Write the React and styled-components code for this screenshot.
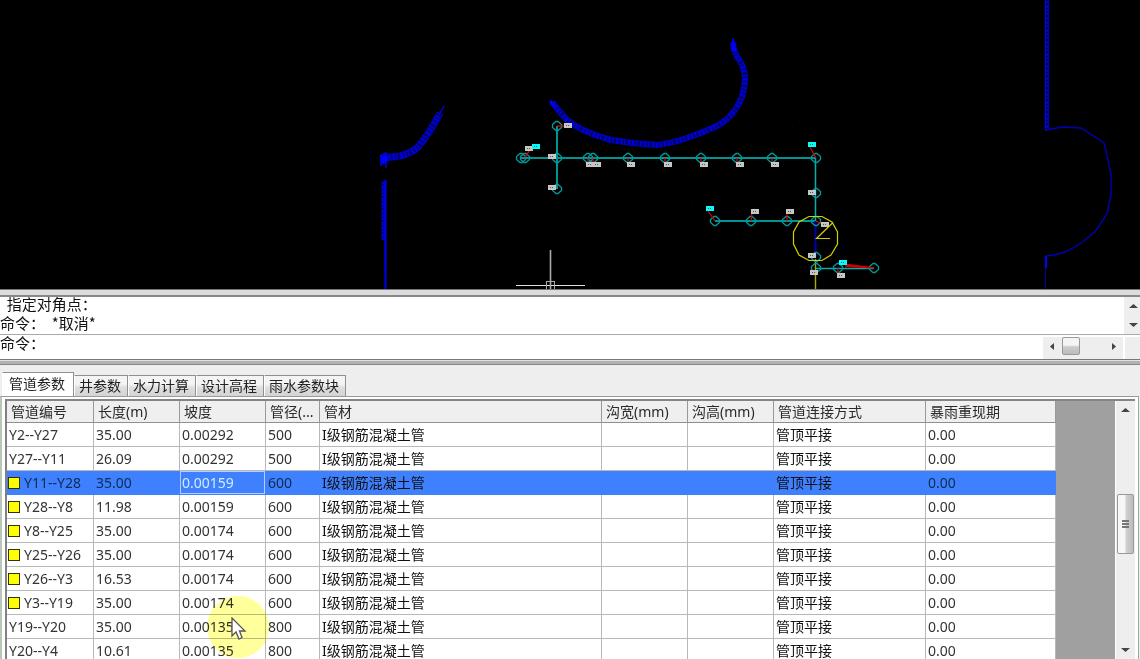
import React, { useState } from 'react';
import styled, { createGlobalStyle, css } from 'styled-components';

const GlobalStyle = createGlobalStyle`
  * { box-sizing: border-box; }
  body {
    margin: 0;
    background: #eeeeee;
    color: #2a2a2a;
    font: 14px/20px "Noto Sans", "Noto Sans CJK SC", sans-serif;
    overflow: hidden;
  }
  button, input { font: inherit; color: inherit; }
`;

const Page = styled.div`
  display: flex;
  flex-direction: column;
  height: 100vh;
`;

/* ---------- drawing area ---------- */

const Drawing = styled.svg`
  display: block;
  flex: none;
  width: 100%;
  height: auto;
  background: #000;
`;

const LEFT_CURVE = 'M383 158 Q392 157 400 156 Q412 153 418 147 Q430 133 440 113';
const LEFT_WALL = 'M383.500 181 V240';
const ARC = 'M552 102 Q558 110 567 120 Q575 126 583 130 Q596 136 611 140 Q634 144 657 145 Q672 143 684 139 Q702 133 717 126 Q728 120 735 110 Q744 98 745 80 Q745 69 740 61 Q733 52 733 42';
const RIGHT_WALL = 'M1047 0 V130';

const NODES = [
  [521, 158], [525, 158], [557, 126], [557, 158], [557, 189], [588, 158], [593, 158],
  [628, 158], [665, 158], [701, 158], [737, 158], [772, 158], [816, 158], [816, 193],
  [816, 221], [816, 257], [816, 268], [838, 268], [874, 268], [715, 221], [751, 221], [787, 221],
];

const TAGS = [
  [568, 125], [529, 148], [552, 156], [552, 187], [590, 164], [597, 164], [631, 164],
  [668, 164], [704, 164], [740, 164], [775, 164], [812, 192], [755, 211], [790, 211],
  [825, 224], [812, 255], [814, 272], [841, 275],
];

const INLET_TAGS = [[536, 146], [812, 144], [710, 208], [843, 262]];

const LEADERS = 'M557 126 L565 126 M525 157 L530 150 L534 147 M588 158 V163 M593 158 V163 M628 158 V163 M665 158 V163 M701 158 V163 M737 158 V163 M772 158 V163 M816 158 L810 147 M715 221 L708 211 M751 221 L752 213 M787 221 V213 M816 221 L822 224 M838 268 V273 M874 268 L843 264 M874 268 L845 266';

const Band = ({ d, width = 6 }) => (
  <g fill="none">
    <path d={d} stroke="#0000cc" strokeWidth={width} />
    <path d={d} stroke="#000044" strokeWidth={width - 2} strokeDasharray="1 2 2 3 1 3" />
  </g>
);

const Tag = ({ x, y, fill }) => (
  <g>
    <rect x={x - 4} y={y - 2} width="8" height="5" fill={fill} />
    <path d={`M${x - 2} ${y + 0.5}h1 M${x} ${y + 0.5}h1`} stroke="#555" />
  </g>
);

const SitePlan = () => (
  <Drawing viewBox="0 0 1140 289" role="img" aria-label="管网平面图">
    <Band d={LEFT_CURVE} width={7} />
    <path d="M380 156 L386 153 V168 M381 156 V166 M439 115 L444 106" fill="none" stroke="#0000e6" strokeWidth="1.5" />
    <path d="M380 156 H388 V161 L382 165 Z" fill="#00f" />
    <Band d={LEFT_WALL} width={4} />
    <path d="M385.500 180 V289" stroke="#0000ee" strokeWidth="2" />
    <path d="M384.500 240 V270" stroke="#0000aa" />
    <Band d={ARC} width={6} />
    <path d="M733 38 L732 50 L736 52 L733 38" stroke="#00f" fill="#00f" />
    <path d="M550 101 L555 106" stroke="#00f" strokeWidth="3" />
    <Band d={RIGHT_WALL} width={4} />
    <path d="M1045.500 0 V131" stroke="#0000ee" />
    <path
      d="M1046 130 L1062 127 L1081 128 L1104 143 L1108 160 L1111 175 V195 L1107 214 L1095 232 L1080 244 L1065 252 L1054 255 L1046 256"
      fill="none"
      stroke="#0000b4"
      strokeWidth="1.4"
    />
    <path d="M1046 256 V268" stroke="#00f" strokeWidth="2" />
    <path d="M1045.500 268 V289" stroke="#0000aa" />
    <path d="M510 140h1 M691 203h1 M792 127h1" stroke="#000088" />

    <g fill="none" stroke="#009494" strokeWidth="2">
      <path d="M521 158 H816 M557 126 V189 M715 221 H816" />
      <path d="M815.500 158 V221 M816 268.500 H874" stroke="#00b0b0" strokeWidth="1.5" />
    </g>
    <path d="M815.500 221 V257" stroke="#0000aa" strokeWidth="2" />
    <path d="M815.500 259 V289" stroke="#aaaa00" strokeWidth="1.4" />
    <g fill="none" stroke="#009a9a" strokeWidth="1.3">
      {NODES.map(([x, y]) => (
        <path key={`${x}-${y}`} d={`M${x - 1} ${y - 4.5} h2 l3.5 3 v3 l-3.5 3 h-2 l-3.5 -3 v-3z`} />
      ))}
    </g>
    <path d={LEADERS} fill="none" stroke="#d40000" strokeWidth="1.3" />
    {TAGS.map(([x, y]) => <Tag key={`${x}-${y}`} x={x} y={y} fill="#c6c6c6" />)}
    {INLET_TAGS.map(([x, y]) => <Tag key={`${x}-${y}`} x={x} y={y} fill="#00ffff" />)}
    <g fill="none" stroke="#d0d000" strokeWidth="1.2">
      <path d="M809 216.500 H822 L832 222 L837.500 232 V244 L831 255 L822 260.500 H809 L799 255 L793.500 244 V232 L799 222 Z" />
      <path d="M830 238.500 H816.500 L833 222.500" />
    </g>

    <path d="M516 285.500 H585" stroke="#e0e0e0" />
    <path d="M550.500 250 V289" stroke="#aaa" strokeWidth="1.6" />
    <rect x="546.500" y="281.500" width="8" height="8" fill="none" stroke="#aaa" />
  </Drawing>
);

/* ---------- splitters ---------- */

const Splitter = styled.div`
  flex: none;
  height: 8px;
  background: #dcdcdc;
  border-top: 1px solid #777777;
  border-bottom: 2px solid #888888;
`;

const DockSplitter = styled.div`
  flex: none;
  height: 6px;
  background: #b2b2b2;
  border-top: 1px solid #777777;
  border-bottom: 1px solid #888888;
  box-shadow: inset 0 1px #e0e0e0;
`;

/* ---------- command window ---------- */

const CommandWindow = styled.section`
  flex: none;
  background: #ffffff;
  color: #111111;
  font-family: "Noto Sans CJK SC", sans-serif;
  font-size: 15px;
`;

const History = styled.div`
  display: flex;
  height: 38px;
  border-bottom: 1px solid #aaaaaa;
`;

const HistoryText = styled.pre`
  flex: 1;
  margin: -3px 0 0;
  font: inherit;
  line-height: 19px;
`;

const Prompt = styled.div`
  display: flex;
  height: 24px;
`;

const PromptLabel = styled.label`
  line-height: 16px;
`;

const PromptInput = styled.input`
  flex: 1;
  min-width: 0;
  border: 0;
  padding: 0;
  outline: 0;
  background: transparent;
`;

const ScrollButton = styled.button`
  display: flex;
  align-items: center;
  justify-content: center;
  width: 18px;
  height: 18px;
  padding: 0;
  border: 0;
  background: transparent;
`;

const HistoryScroll = styled.div`
  display: flex;
  flex-direction: column;
  justify-content: space-between;
  align-items: center;
  width: 16px;
  padding-left: 2px;
  background: #eeeeee;
`;

const HorizontalScroll = styled.div`
  display: flex;
  align-items: flex-start;
  width: 82px;
  margin-top: 2px;
  background: #eeeeee;
  border-right: 2px solid #ffffff;
`;

const Corner = styled.div`
  width: 15px;
  margin-top: 2px;
  background: #eeeeee;
`;

const SmallThumb = styled.div`
  width: 18px;
  height: 18px;
  margin: 0 24px 0 1px;
  border: 1px solid #999999;
  border-radius: 2px;
  background: linear-gradient(#f4f4f4 45%, #cccccc 55%, #bbbbbb);
`;

const ARROWS = {
  up: 'M0 6 L4.500 2 L9 6Z',
  down: 'M0 2 L4.500 6 L9 2Z',
  left: 'M6 1 L2 4.500 L6 8Z',
  right: 'M3 1 L7 4.500 L3 8Z',
};

const Arrow = ({ direction, label }) => (
  <ScrollButton aria-label={label}>
    <svg width="9" height="9" viewBox="0 0 9 9">
      <path d={ARROWS[direction]} fill="#444" />
    </svg>
  </ScrollButton>
);

/* ---------- parameter panel ---------- */

const Panel = styled.section`
  position: relative;
  display: flex;
  flex: 1;
  flex-direction: column;
  min-height: 0;
  padding-top: 7px;
`;

const TabList = styled.div`
  display: flex;
  flex: none;
  align-items: flex-end;
  height: 24px;
  padding-left: 2px;
`;

const Tab = styled.button`
  height: 21px;
  padding: 0 6px 0 4px;
  border: 1px solid #909090;
  border-bottom: 0;
  border-left-color: #ffffff;
  background: linear-gradient(#f4f4f4 40%, #dddddd 60%, #d4d4d4);
  color: #222222;
  line-height: 20px;
  white-space: nowrap;
  ${({ $active }) => $active && css`
    height: 24px;
    padding: 0 8px 2px 6px;
    background: #ffffff;
  `}
`;

const TabBody = styled.div`
  display: flex;
  flex: 1;
  min-height: 0;
  margin-right: 1px;
  padding: 2px 3px 0 3px;
  border: 1px solid #999999;
  border-left: 2px solid #b6c9b6;
  border-right: 1px solid #8fae8f;
  border-bottom: 0;
  background: #ffffff;
`;

const GridArea = styled.div`
  display: flex;
  flex: 1;
  min-width: 0;
  overflow: hidden;
  border-top: 2px solid #858585;
  border-left: 2px solid #808080;
  background: #a0a0a0;
`;

const Table = styled.table`
  flex: none;
  align-self: flex-start;
  width: 1049px;
  table-layout: fixed;
  border-collapse: separate;
  border-spacing: 0;
  background: #ffffff;
`;

const HeadCell = styled.th`
  height: 22px;
  padding: 0 4px;
  border-right: 1px solid #999999;
  border-bottom: 1px solid #8f8f8f;
  background: #efefef;
  font-weight: 400;
  line-height: 20px;
  text-align: left;
  white-space: nowrap;
`;

const Row = styled.tr`
  background: ${({ $selected }) => ($selected ? '#3f80ff' : '#ffffff')};
  color: ${({ $selected }) => ($selected ? '#0c2c50' : '#333333')};
  td {
    border-color: ${({ $selected }) => ($selected ? '#3f80ff' : '#b8b8b8')};
  }
`;

const Cell = styled.td`
  height: 24px;
  padding: 0 2px;
  border-right: 1px solid;
  border-bottom: 1px solid;
  line-height: 22px;
  white-space: nowrap;
  ${({ $dark }) => $dark && css`color: #111111;`}
  ${({ $editing }) => $editing && css`padding: 0;`}
`;

const Marker = styled.span`
  display: inline-block;
  width: 12px;
  height: 12px;
  margin: 0 4px 0 -1px;
  vertical-align: -1px;
  border: 1px solid #333300;
  background: #ffff00;
`;

const CellInput = styled.input`
  display: block;
  width: 100%;
  height: 23px;
  padding: 0 1px;
  border: 1px solid #b4ccff;
  outline: 0;
  background: #3f80ff;
  color: #d2ecff;
`;

const GridScroll = styled.div`
  display: flex;
  flex: none;
  flex-direction: column;
  align-items: center;
  width: 20px;
  border-top: 2px solid #858585;
  background: #eeeeee;
  box-shadow: inset 1px 0 #ffffff;
`;

const Track = styled.div`
  display: flex;
  flex: 1;
  flex-direction: column;
  justify-content: center;
  padding-bottom: 12px;
`;

const Thumb = styled.div`
  display: flex;
  flex-direction: column;
  align-items: center;
  justify-content: center;
  gap: 1px;
  width: 17px;
  height: 60px;
  border: 1px solid #999999;
  border-radius: 2px;
  background: linear-gradient(90deg, #f6f6f6 45%, #d0d0d0 55%, #bcbcbc);
`;

const Grip = styled.span`
  width: 7px;
  height: 2px;
  background: #777777;
`;

const Pointer = styled.div`
  position: absolute;
  left: 207px;
  top: 231px;
  width: 62px;
  height: 62px;
  border-radius: 50%;
  background: #ffff9c;
  mix-blend-mode: multiply;
  pointer-events: none;
`;

const PointerArrow = styled.svg`
  position: absolute;
  left: 231px;
  top: 252px;
  pointer-events: none;
`;

const COLUMNS = [
  ['管道编号', 87], ['长度(m)', 86], ['坡度', 86], ['管径(...', 54], ['管材', 282],
  ['沟宽(mm)', 86], ['沟高(mm)', 86], ['管道连接方式', 152], ['暴雨重现期', 130],
];

const PIPES = [
  ['Y2--Y27', '35.00', '0.00292', '500'],
  ['Y27--Y11', '26.09', '0.00292', '500'],
  ['Y11--Y28', '35.00', '0.00159', '600', true],
  ['Y28--Y8', '11.98', '0.00159', '600', true],
  ['Y8--Y25', '35.00', '0.00174', '600', true],
  ['Y25--Y26', '35.00', '0.00174', '600', true],
  ['Y26--Y3', '16.53', '0.00174', '600', true],
  ['Y3--Y19', '35.00', '0.00174', '600', true],
  ['Y19--Y20', '35.00', '0.00135', '800'],
  ['Y20--Y4', '10.61', '0.00135', '800'],
];

const TABS = ['管道参数', '井参数', '水力计算', '设计高程', '雨水参数块'];

function PipeTable() {
  const [slope, setSlope] = useState('0.00159');
  return (
    <Table>
      <colgroup>
        {COLUMNS.map(([name, width]) => <col key={name} width={width} />)}
      </colgroup>
      <thead>
        <tr>
          {COLUMNS.map(([name]) => <HeadCell key={name} scope="col">{name}</HeadCell>)}
        </tr>
      </thead>
      <tbody>
        {PIPES.map(([id, length, grade, diameter, marked]) => {
          const selected = id === 'Y11--Y28';
          return (
            <Row key={id} $selected={selected}>
              <Cell>{marked && <Marker />}{id}</Cell>
              <Cell>{length}</Cell>
              <Cell $editing={selected}>
                {selected
                  ? <CellInput aria-label="坡度" value={slope} onChange={(e) => setSlope(e.target.value)} />
                  : grade}
              </Cell>
              <Cell>{diameter}</Cell>
              <Cell $dark>I级钢筋混凝土管</Cell>
              <Cell />
              <Cell />
              <Cell $dark>管顶平接</Cell>
              <Cell>0.00</Cell>
            </Row>
          );
        })}
      </tbody>
    </Table>
  );
}

export default function App() {
  const [activeTab, setActiveTab] = useState(TABS[0]);
  return (
    <Page>
      <GlobalStyle />
      <SitePlan />
      <Splitter />
      <CommandWindow>
        <History>
          <HistoryText>{'  指定对角点：\n命令：  *取消*'}</HistoryText>
          <HistoryScroll>
            <Arrow direction="up" label="向上滚动" />
            <Arrow direction="down" label="向下滚动" />
          </HistoryScroll>
        </History>
        <Prompt>
          <PromptLabel htmlFor="command">命令：</PromptLabel>
          <PromptInput id="command" />
          <HorizontalScroll>
            <Arrow direction="left" label="向左滚动" />
            <SmallThumb />
            <Arrow direction="right" label="向右滚动" />
          </HorizontalScroll>
          <Corner />
        </Prompt>
      </CommandWindow>
      <DockSplitter />
      <Panel>
        <TabList role="tablist">
          {TABS.map((tab) => (
            <Tab
              key={tab}
              role="tab"
              aria-selected={tab === activeTab}
              $active={tab === activeTab}
              onClick={() => setActiveTab(tab)}
            >
              {tab}
            </Tab>
          ))}
        </TabList>
        <TabBody>
          <GridArea>
            <PipeTable />
          </GridArea>
          <GridScroll>
            <Arrow direction="up" label="表格向上滚动" />
            <Track>
              <Thumb><Grip /><Grip /><Grip /></Thumb>
            </Track>
            <Arrow direction="down" label="表格向下滚动" />
          </GridScroll>
        </TabBody>
        <Pointer />
        <PointerArrow width="16" height="24" viewBox="0 0 16 24">
          <path d="M1 1 V19 L5 15 L8 22 L11 20.500 L8.500 14 H14 Z" fill="#fff" stroke="#555" strokeWidth="1.3" />
        </PointerArrow>
      </Panel>
    </Page>
  );
}
